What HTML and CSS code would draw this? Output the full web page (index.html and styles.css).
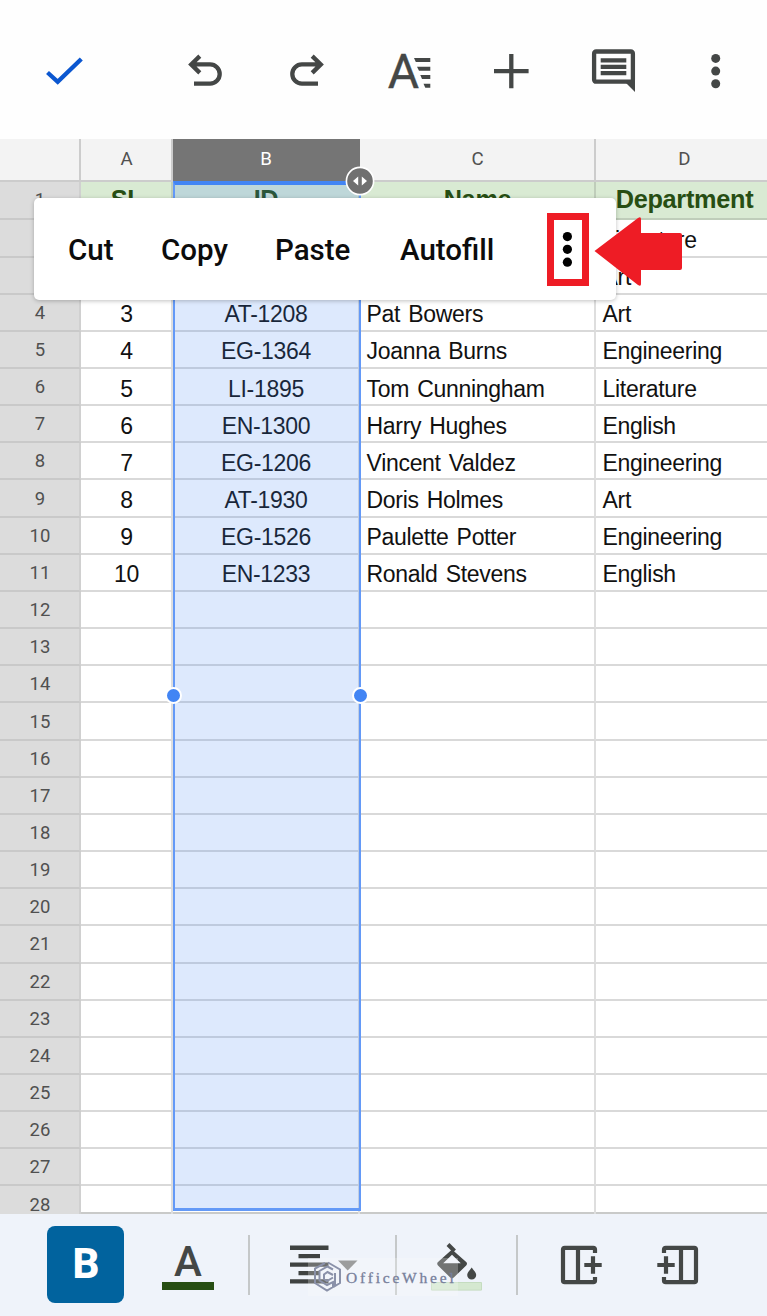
FILE: index.html
```html
<!DOCTYPE html>
<html lang="en">
<head>
    <meta charset="UTF-8">
    <meta name="viewport" content="width=device-width, initial-scale=1.0">
    <title>Sheet</title>
    <link rel="stylesheet" href="styles.css">
</head>
<body>
    <header class="toolbar">
        <svg class="icon check" viewBox="0 0 48 48"><path d="M7.5 24.5L17.7 33.8L41.3 11"/></svg>
        <div class="toolbar-actions">
            <svg class="icon" viewBox="0 0 48 48"><path d="M10 16.4H29.1a9.6 9.6 0 0 1 0 19.2H13M18.8 8.1L10.2 16.4L18.8 24.9"/></svg>
            <svg class="icon" viewBox="0 0 48 48"><path transform="translate(48 0) scale(-1 1)" d="M10 16.4H29.1a9.6 9.6 0 0 1 0 19.2H13M18.8 8.1L10.2 16.4L18.8 24.9"/></svg>
            <svg class="icon" viewBox="0 0 48 48">
                <text class="icon-letter" x="2.8" y="40">A</text>
                <path class="fill" d="M29 10h16.3v4H30.8zM32 18.7h13.3v4H34zM35.3 27h10v4H37zM38.5 35.7h6.8v4H40.3z"/>
            </svg>
            <svg class="icon" viewBox="0 0 48 48"><path d="M7 23.2H41.6M24.3 6V40.2"/></svg>
            <svg class="icon" viewBox="0 0 48 48">
                <rect x="5.1" y="3.5" width="38.8" height="30.2" rx="2"/>
                <path d="M11.7 12.4H37.3M11.7 18.8H37.3M11.7 25.2H37.3"/>
                <path class="fill" d="M37 35L46 44V30z"/>
            </svg>
            <svg class="icon" viewBox="0 0 48 48"><g class="fill"><circle cx="24.7" cy="10.4" r="4.5"/><circle cx="24.7" cy="23.1" r="4.5"/><circle cx="24.7" cy="35.8" r="4.5"/></g></svg>
        </div>
    </header>

    <main class="sheet">
        <div class="row columns">
            <div class="num"></div><div>A</div><div class="active">B</div><div>C</div><div>D</div>
        </div>
        <div class="row titles"><div class="num">1</div><div>SL</div><div>ID</div><div>Name</div><div>Department</div></div>
        <div class="row"><div class="num">2</div><div>1</div><div></div><div></div><div>Literature</div></div>
        <div class="row"><div class="num">3</div><div>2</div><div></div><div></div><div>Art</div></div>
        <div class="row"><div class="num">4</div><div>3</div><div>AT-1208</div><div>Pat Bowers</div><div>Art</div></div>
        <div class="row"><div class="num">5</div><div>4</div><div>EG-1364</div><div>Joanna Burns</div><div>Engineering</div></div>
        <div class="row"><div class="num">6</div><div>5</div><div>LI-1895</div><div>Tom Cunningham</div><div>Literature</div></div>
        <div class="row"><div class="num">7</div><div>6</div><div>EN-1300</div><div>Harry Hughes</div><div>English</div></div>
        <div class="row"><div class="num">8</div><div>7</div><div>EG-1206</div><div>Vincent Valdez</div><div>Engineering</div></div>
        <div class="row"><div class="num">9</div><div>8</div><div>AT-1930</div><div>Doris Holmes</div><div>Art</div></div>
        <div class="row"><div class="num">10</div><div>9</div><div>EG-1526</div><div>Paulette Potter</div><div>Engineering</div></div>
        <div class="row"><div class="num">11</div><div>10</div><div>EN-1233</div><div>Ronald Stevens</div><div>English</div></div>
        <div class="row"><div class="num">12</div><div></div><div></div><div></div><div></div></div>
        <div class="row"><div class="num">13</div><div></div><div></div><div></div><div></div></div>
        <div class="row"><div class="num">14</div><div></div><div></div><div></div><div></div></div>
        <div class="row"><div class="num">15</div><div></div><div></div><div></div><div></div></div>
        <div class="row"><div class="num">16</div><div></div><div></div><div></div><div></div></div>
        <div class="row"><div class="num">17</div><div></div><div></div><div></div><div></div></div>
        <div class="row"><div class="num">18</div><div></div><div></div><div></div><div></div></div>
        <div class="row"><div class="num">19</div><div></div><div></div><div></div><div></div></div>
        <div class="row"><div class="num">20</div><div></div><div></div><div></div><div></div></div>
        <div class="row"><div class="num">21</div><div></div><div></div><div></div><div></div></div>
        <div class="row"><div class="num">22</div><div></div><div></div><div></div><div></div></div>
        <div class="row"><div class="num">23</div><div></div><div></div><div></div><div></div></div>
        <div class="row"><div class="num">24</div><div></div><div></div><div></div><div></div></div>
        <div class="row"><div class="num">25</div><div></div><div></div><div></div><div></div></div>
        <div class="row"><div class="num">26</div><div></div><div></div><div></div><div></div></div>
        <div class="row"><div class="num">27</div><div></div><div></div><div></div><div></div></div>
        <div class="row"><div class="num">28</div><div></div><div></div><div></div><div></div></div>

        <div class="selection">
            <span class="handle left"></span>
            <span class="handle right"></span>
        </div>
        <svg class="resize" viewBox="0 0 30 30">
            <circle cx="15" cy="15" r="13.6"/>
            <path d="M13.2 10.4v9.2L8 15zM16.8 10.4v9.2L22 15z"/>
        </svg>

        <div class="menu">
            <span class="cut">Cut</span>
            <span class="copy">Copy</span>
            <span class="paste">Paste</span>
            <span class="autofill">Autofill</span>
            <div class="more">
                <svg viewBox="0 0 28 59"><circle cx="13.4" cy="16.6" r="4.6"/><circle cx="13.4" cy="29.3" r="4.6"/><circle cx="13.4" cy="42.2" r="4.6"/></svg>
            </div>
        </div>
        <svg class="pointer" viewBox="0 0 90 70"><path d="M0.5 34L44 1q3-2 3 1V16h39q2 0 2 2V51q0 2-2 2H47v14q0 3-3 1z"/></svg>
    </main>

    <footer class="formatbar">
        <div class="bold">B</div>
        <div class="text-color">A</div>
        <i class="divider"></i>
        <svg class="align" viewBox="0 0 70 40">
            <path d="M0 4.7H38.5M8.5 13.1H30M0 21.6H38.5M8.5 30.1H30M0 38.4H38.5"/>
            <path class="caret" d="M48 17.5H67.5L57.7 27.5z"/>
        </svg>
        <i class="divider"></i>
        <svg class="bucket" viewBox="0 0 54 50">
            <path class="swatch" d="M1.5 41.5h50v7.6h-50z"/>
            <path class="stem" d="M18 3.5L24.5 10"/>
            <path class="fill" fill-rule="evenodd" d="M22 8.5L36.2 21q1.6 1.7 0 3.4L23.8 36.6q-1.8 1.6-3.6 0L8 24.4q-1.6-1.7 0-3.4zM22 13.8L13.2 22.3h17.6z"/>
            <path class="fill" d="M41.7 26.5c2 3 4.5 4.8 4.5 7.5a4.5 4.5 0 0 1-9 0c0-2.7 2.5-4.5 4.5-7.5z"/>
        </svg>
        <i class="divider"></i>
        <svg class="insert-right" viewBox="0 0 44 44"><path d="M35 10V6.5q0-1.7-1.7-1.7H4.7Q3 4.8 3 6.5V37.5q0 1.7 1.7 1.7H33.3q1.7 0 1.7-1.7V34M18 4.8V39.2M24.3 22H41.7M33 13.3V30.7"/></svg>
        <svg class="insert-left" viewBox="0 0 44 44"><path transform="translate(44 0) scale(-1 1)" d="M35 10V6.5q0-1.7-1.7-1.7H4.7Q3 4.8 3 6.5V37.5q0 1.7 1.7 1.7H33.3q1.7 0 1.7-1.7V34M18 4.8V39.2M24.3 22H41.7M33 13.3V30.7"/></svg>

        <div class="brand">
            <svg viewBox="0 0 30 32"><path d="M12 2L2 7.5V22L14 29.5L20 26V21L14 24L6.5 19.500V10L14.500 5.500L20 8.500M15 1.500L27 8.500V22L22 25V12M20 14L14.500 11L11 13.500V18L14 20L20 16.500"/></svg>
            <span>OfficeWheel</span>
        </div>
    </footer>
</body>
</html>
```
FILE: styles.css
```css
* {
    margin: 0;
    padding: 0;
    box-sizing: border-box;
}

body {
    width: 767px;
    height: 1316px;
    overflow: hidden;
    display: flex;
    flex-direction: column;
    background-color: #fff;
    font-family: Roboto, sans-serif;
}

.toolbar {
    height: 139px;
    flex: none;
    padding: 48px 0 0 40px;
    display: flex;
    align-items: flex-start;
    gap: 93px;
    background-color: #fefefe;
}

.toolbar-actions {
    display: flex;
    gap: 54px;
}

.icon {
    width: 48px;
    height: 48px;
    flex: none;
    overflow: visible;
    fill: none;
    stroke: #444746;
    stroke-width: 4.3;
}

.icon .fill {
    fill: #444746;
    stroke: none;
}

.icon-letter {
    fill: #444746;
    stroke: #444746;
    stroke-width: 0.4;
    font-size: 48px;
}

.check {
    stroke: #0b57d0;
}

/* grid */
.sheet {
    position: relative;
    height: 1075px;
    flex: none;
    border-bottom: 2px solid #c9cac9;
}

/* rows run past the bottom edge and are covered by the format bar */
.row {
    display: grid;
    grid-template-columns: 81px 92px 187px 236px 178px;
    height: 37.17px;
    font-family: "Liberation Sans", Arial, sans-serif;
    font-size: 23px;
    letter-spacing: -0.3px;
    word-spacing: 2px;
    color: #111;
}

.row > div {
    display: flex;
    align-items: center;
    justify-content: center;
    padding: 5px 0 0 1px;
    border-right: 2px solid #dedede;
    border-bottom: 2px solid #d9d9d9;
    white-space: nowrap;
}

.row > div:nth-child(n+4) {
    justify-content: flex-start;
    padding-left: 6.5px;
}

.row > .num {
    padding-top: 1px;
    background-color: #dcdcdc;
    border-right-color: #d0d0d0;
    border-bottom-color: #c9c9c9;
    font-family: Roboto, sans-serif;
    font-size: 18.5px;
    letter-spacing: 0;
    color: #505050;
}

.row.columns {
    height: 42.5px;
}

.row.columns > div {
    justify-content: center;
    padding: 0 0 0 1px;
    background-color: #f3f3f3;
    border-color: #ccc;
    font-family: Roboto, sans-serif;
    font-size: 18.7px;
    letter-spacing: 0;
    color: #505050;
}

.row.columns > .active {
    background-color: #757575;
    border-color: #757575;
    color: #fff;
}

.row.titles {
    height: 38.9px;
    font-size: 25.3px;
}

.row.titles > div:not(.num) {
    justify-content: center;
    padding: 0 0 0 1px;
    background-color: #d9ead3;
    border-color: #bfcdba;
    font-weight: bold;
    color: #274e13;
}

.selection {
    position: absolute;
    left: 173px;
    top: 42px;
    width: 188px;
    height: 1030px;
    border: 2px solid #6399f7;
    border-top: 4px solid #4285f4;
    border-bottom-width: 3px;
    background-color: rgba(66, 133, 244, 0.18);
    background-clip: padding-box;
}

.handle {
    position: absolute;
    top: 502px;
    width: 17px;
    height: 17px;
    border: 2px solid #fff;
    border-radius: 50%;
    background-color: #4285f4;
}

.handle.left {
    left: -10px;
}

.handle.right {
    right: -10px;
}

.resize {
    position: absolute;
    left: 345px;
    top: 26.5px;
    width: 30px;
    height: 30px;
    fill: #fff;
}

.resize circle {
    fill: #707070;
    stroke: #fff;
    stroke-width: 1.6;
}

/* context menu over the cells */
.menu {
    position: absolute;
    left: 34px;
    top: 59px;
    width: 582px;
    height: 102px;
    padding-left: 34px;
    display: flex;
    align-items: center;
    background-color: #fff;
    border-radius: 5px;
    box-shadow: 0 1px 4px rgba(0, 0, 0, 0.25);
    font-size: 29.5px;
    font-weight: 500;
    color: #0c0c0c;
}

.menu span {
    padding-top: 2px;
}

.cut {
    width: 93px;
}

.copy {
    width: 114px;
}

.paste {
    width: 125px;
}

.autofill {
    width: 147px;
}

.more {
    width: 42px;
    height: 73px;
    border: 7px solid #ee1c25;
}

.more svg {
    display: block;
    width: 28px;
    height: 59px;
}

.pointer {
    position: absolute;
    left: 594px;
    top: 78px;
    width: 90px;
    height: 70px;
    fill: #ee1c25;
}

/* bottom bar */
.formatbar {
    position: relative;
    flex: 1;
    display: flex;
    align-items: flex-start;
    padding: 12px 0 0 47px;
    background-color: #eff3fa;
}

.bold {
    width: 77px;
    height: 77px;
    padding-left: 1px;
    border-radius: 8px;
    background-color: #01639e;
    color: #fff;
    font-size: 42px;
    font-weight: 800;
    line-height: 76px;
    text-align: center;
}

.text-color {
    width: 52px;
    height: 64px;
    margin-left: 38px;
    border-bottom: 8px solid #274e13;
    color: #444746;
    font-size: 42px;
    font-weight: 500;
    line-height: 71px;
    text-align: center;
}

.divider {
    width: 2px;
    height: 60px;
    margin-top: 9px;
    background-color: #c5c8c9;
}

.text-color + .divider {
    margin-left: 34px;
}

.align {
    width: 70px;
    height: 40px;
    margin: 17px 35px 0 40px;
    overflow: visible;
    stroke: #3f4241;
    stroke-width: 4.4;
}

.align .caret {
    fill: #7c7e7e;
    stroke: none;
}

.bucket {
    width: 54px;
    height: 50px;
    margin: 15px 32px 0 33px;
}

.bucket .swatch {
    fill: #d5e8d0;
    stroke: #c5dcc0;
}

.bucket .stem {
    stroke: #444746;
    stroke-width: 4;
}

.bucket .fill {
    fill: #444746;
}

.insert-right,
.insert-left {
    width: 44px;
    height: 44px;
    margin-top: 17px;
    fill: none;
    stroke: #444746;
    stroke-width: 4.2;
}

.insert-right {
    margin-left: 42px;
}

.insert-left {
    margin-left: 51px;
}

.brand {
    position: absolute;
    left: 308px;
    top: 44px;
    width: 150px;
    height: 38px;
    padding-left: 5px;
    display: flex;
    align-items: center;
    background-color: rgba(250, 251, 253, 0.25);
}

.brand svg {
    width: 30px;
    height: 32px;
    flex: none;
    fill: none;
    stroke: #8a91a9;
    stroke-width: 2;
}

.brand span {
    margin-left: 3px;
    padding-top: 1px;
    font-family: "Liberation Serif", serif;
    font-size: 15.5px;
    letter-spacing: 2.8px;
    color: #77809b;
    -webkit-text-stroke: 0.3px #77809b;
}
```
